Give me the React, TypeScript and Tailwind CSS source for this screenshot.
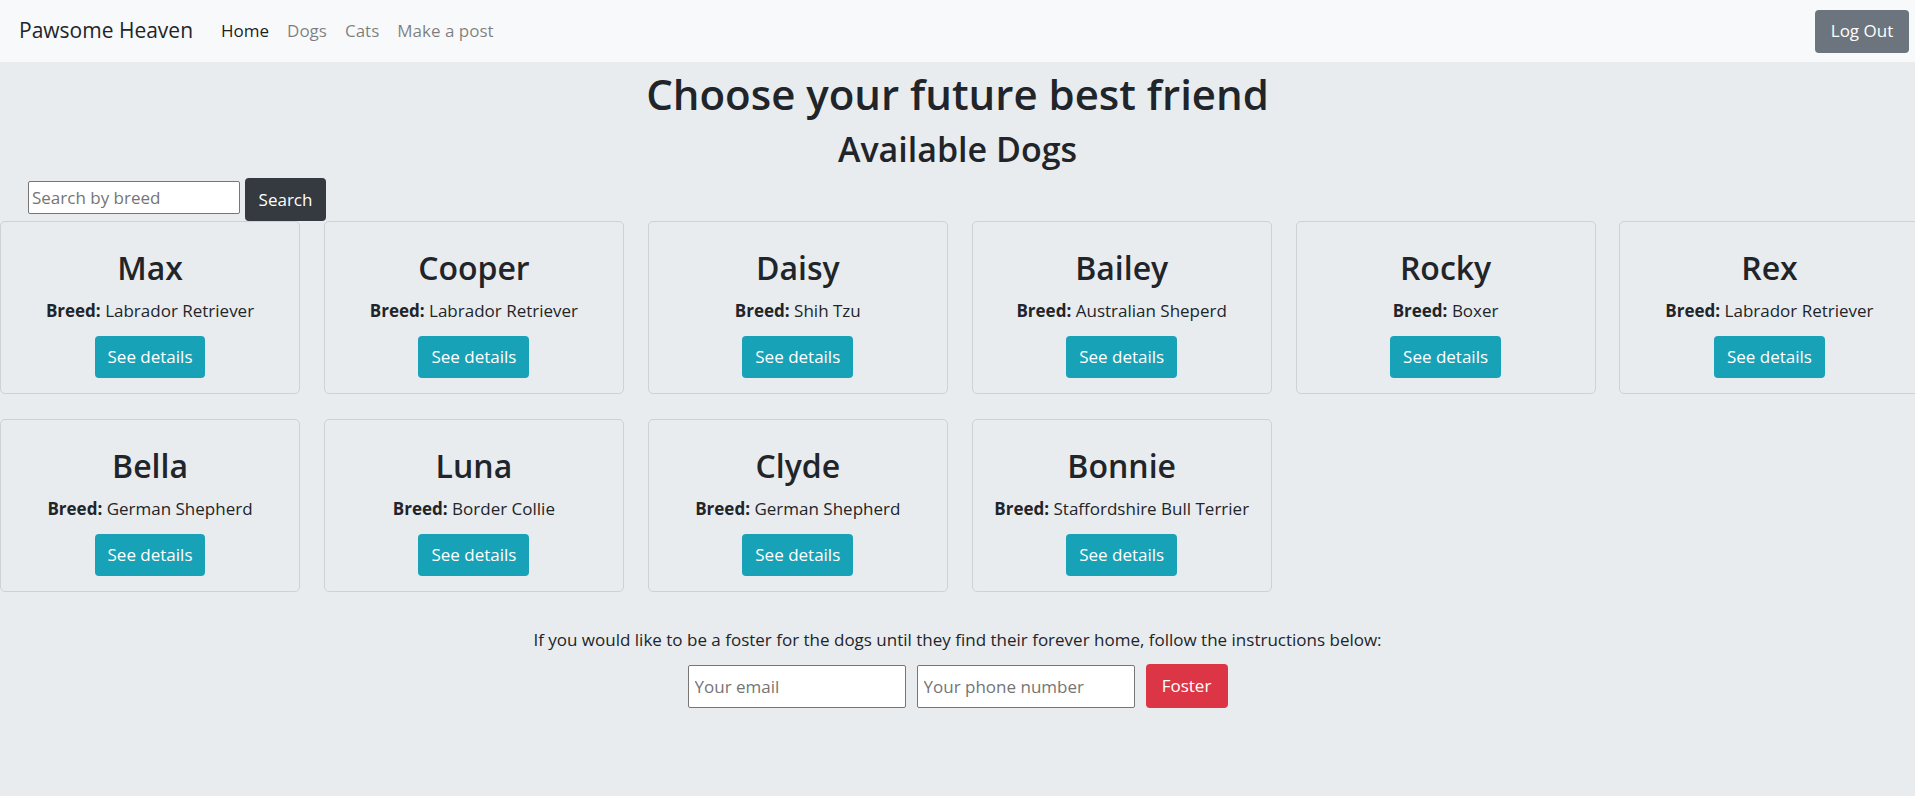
import React from "react";

const dogs = [
  { name: "Max", breed: "Labrador Retriever" },
  { name: "Cooper", breed: "Labrador Retriever" },
  { name: "Daisy", breed: "Shih Tzu" },
  { name: "Bailey", breed: "Australian Sheperd" },
  { name: "Rocky", breed: "Boxer" },
  { name: "Rex", breed: "Labrador Retriever" },
  { name: "Bella", breed: "German Shepherd" },
  { name: "Luna", breed: "Border Collie" },
  { name: "Clyde", breed: "German Shepherd" },
  { name: "Bonnie", breed: "Staffordshire Bull Terrier" },
];

function DogCard({ name, breed }: { name: string; breed: string }) {
  return (
    <div className="w-[300px] h-[173px] border border-[#cfd2d5] rounded-[5px] flex flex-col items-center pt-[25px]">
      <h2 className="text-[32px] leading-[42px] font-semibold text-[#212529]">{name}</h2>
      <p className="mt-[9px] text-[17px] leading-[26px] text-[#212529]">
        <strong className="font-bold">Breed:</strong> {breed}
      </p>
      <button className="mt-[12px] h-[42px] px-[13px] rounded-[4px] bg-[#17a2b8] text-white text-[17px]">
        See details
      </button>
    </div>
  );
}

export default function App() {
  return (
    <div className="min-h-screen bg-[#e9ecef] overflow-hidden text-[#212529] font-['Open_Sans',sans-serif]">
      <nav className="h-[62px] bg-[#f8f9fa] flex items-center pl-[19px] pr-[6px]">
        <span className="text-[21px] text-[#212529] mr-[19px]">Pawsome Heaven</span>
        <div className="flex items-center text-[17px]">
          <a className="px-[9px] text-[rgba(0,0,0,0.9)]">Home</a>
          <a className="px-[9px] text-[rgba(0,0,0,0.5)]">Dogs</a>
          <a className="px-[9px] text-[rgba(0,0,0,0.5)]">Cats</a>
          <a className="px-[9px] text-[rgba(0,0,0,0.5)]">Make a post</a>
        </div>
        <button className="ml-auto h-[43px] w-[94px] rounded-[4px] bg-[#6c757d] text-white text-[17px]">
          Log Out
        </button>
      </nav>

      <main>
        <h1 className="text-center text-[42px] leading-[53px] font-semibold mt-[5px]">
          Choose your future best friend
        </h1>
        <h2 className="text-center text-[34px] leading-[42px] font-semibold mt-[8px]">
          Available Dogs
        </h2>

        <div className="flex items-end gap-[5px] ml-[28px] mt-[8px]">
          <input
            placeholder="Search by breed"
            className="w-[212px] h-[33px] mb-[7px] bg-white border border-[#767676] rounded-[2px] px-[3px] text-[17px] placeholder:text-[#757575] outline-none"
          />
          <button className="h-[43px] w-[81px] rounded-[4px] bg-[#343a40] text-white text-[17px]">
            Search
          </button>
        </div>

        <div className="grid grid-cols-[repeat(6,300px)] gap-x-[23.9px] gap-y-[25px] w-[1920px]">
          {dogs.map((d) => (
            <DogCard key={d.name} name={d.name} breed={d.breed} />
          ))}
        </div>

        <div className="flex flex-col items-center mt-[35px]">
          <p className="text-[17px] leading-[26px]">
            If you would like to be a foster for the dogs until they find their forever home, follow the
            instructions below:
          </p>
          <div className="flex items-center gap-[11px] mt-[11px]">
            <input
              placeholder="Your email"
              className="w-[218px] h-[43px] bg-white border border-[#767676] rounded-[2px] px-[6px] text-[17px] placeholder:text-[#757575] outline-none"
            />
            <input
              placeholder="Your phone number"
              className="w-[218px] h-[43px] bg-white border border-[#767676] rounded-[2px] px-[6px] text-[17px] placeholder:text-[#757575] outline-none"
            />
            <button className="h-[44px] w-[82px] rounded-[4px] bg-[#dc3545] text-white text-[17px]">
              Foster
            </button>
          </div>
        </div>
      </main>
    </div>
  );
}
